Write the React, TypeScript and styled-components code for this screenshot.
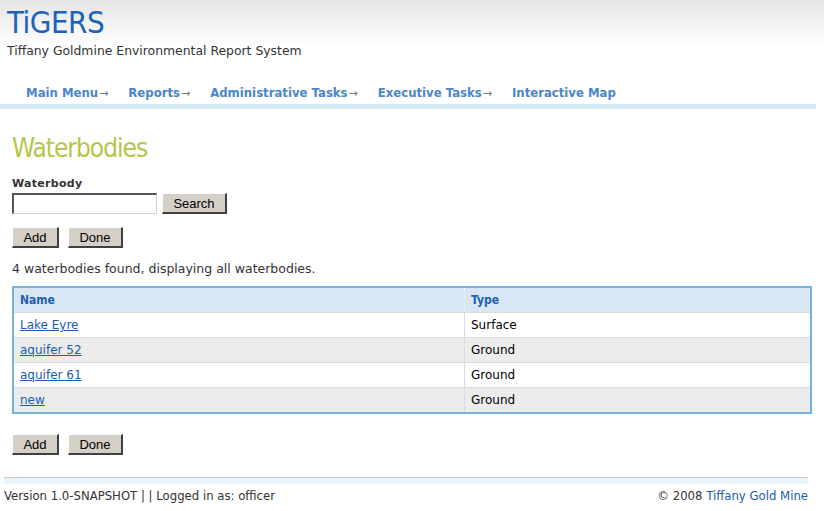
import React from "react";
import styled, { createGlobalStyle } from "styled-components";

interface Waterbody {
  name: string;
  type: string;
}

const waterbodies: Waterbody[] = [
  { name: "Lake Eyre", type: "Surface" },
  { name: "aquifer 52", type: "Ground" },
  { name: "aquifer 61", type: "Ground" },
  { name: "new", type: "Ground" },
];

const navItems = [
  { label: "Main Menu", arrow: true },
  { label: "Reports", arrow: true },
  { label: "Administrative Tasks", arrow: true },
  { label: "Executive Tasks", arrow: true },
  { label: "Interactive Map", arrow: false },
];

const App = () => {
  return (
    <>
      <GlobalStyle />
      <Header>
        <Logo>TiGERS</Logo>
        <Subtitle>Tiffany Goldmine Environmental Report System</Subtitle>
      </Header>
      <Nav>
        {navItems.map((item) => (
          <NavItem key={item.label}>
            <NavLink href="#">{item.label}</NavLink>
            {item.arrow && <NavArrow>→</NavArrow>}
          </NavItem>
        ))}
      </Nav>

      <Main>
        <Title>Waterbodies</Title>
        <SearchForm>
          <FieldLabel>Waterbody</FieldLabel>
          <SearchRow>
            <TextInput type="text" />
            <Button $width={65}>Search</Button>
          </SearchRow>
        </SearchForm>
        <ButtonRow>
          <Button $width={47}>Add</Button>
          <Button $width={55}>Done</Button>
        </ButtonRow>
        <Message>4 waterbodies found, displaying all waterbodies.</Message>

        <Table>
          <thead>
            <tr>
              <Th>Name</Th>
              <Th>Type</Th>
            </tr>
          </thead>
          <tbody>
            {waterbodies.map((w, i) => (
              <Row key={w.name} $odd={i % 2 === 1}>
                <Td>
                  <CellLink href="#">{w.name}</CellLink>
                </Td>
                <Td>{w.type}</Td>
              </Row>
            ))}
          </tbody>
        </Table>

        <ButtonRow $bottom>
          <Button $width={47}>Add</Button>
          <Button $width={55}>Done</Button>
        </ButtonRow>
      </Main>

      <Footer>
        <FooterText>Version 1.0-SNAPSHOT | | Logged in as: officer</FooterText>
        <FooterText>
          © 2008 <FooterLink href="#">Tiffany Gold Mine</FooterLink>
        </FooterText>
      </Footer>
    </>
  );
};

export default App;

const GlobalStyle = createGlobalStyle`
  body {
    margin: 0;
    background: #ffffff;
    font-family: "DejaVu Sans", Verdana, sans-serif;
    color: #333333;
  }
`;

const Header = styled.div`
  height: 78px;
  padding: 5px 7px 0;
  box-sizing: border-box;
  background: linear-gradient(#e4e4e4 0px, #f6f6f6 30px, #ffffff 48px);
`;

const Logo = styled.div`
  font-family: "DejaVu Sans Condensed", "DejaVu Sans", sans-serif;
  font-size: 31px;
  line-height: 34px;
  letter-spacing: -0.5px;
  color: #1b63b7;
`;

const Subtitle = styled.div`
  margin-top: 4px;
  font-size: 12.4px;
  line-height: 16px;
  color: #333333;
`;

const Nav = styled.nav`
  display: flex;
  align-items: flex-end;
  height: 31px;
  margin-right: 8px;
  padding-left: 26px;
  padding-bottom: 4px;
  box-sizing: border-box;
  gap: 20px;
  border-bottom: 5px solid #d6e8f4;
`;

const NavItem = styled.div`
  display: flex;
  align-items: center;
`;

const NavLink = styled.a`
  font-family: "DejaVu Sans", sans-serif;
  font-size: 11.7px;
  font-weight: bold;
  color: #4a86c8;
  text-decoration: none;
`;

const NavArrow = styled.span`
  font-family: "DejaVu Sans", sans-serif;
  font-size: 11px;
  color: #777777;
  margin-left: 1px;
`;

const Main = styled.div`
  padding: 0 12px;
`;

const Title = styled.h1`
  margin: 22px 0 0;
  font-family: "DejaVu Sans Condensed", "DejaVu Sans", sans-serif;
  font-size: 26px;
  line-height: 34px;
  font-weight: normal;
  letter-spacing: -1px;
  color: #b5c648;
`;

const SearchForm = styled.div`
  margin-top: 12px;
`;

const FieldLabel = styled.div`
  font-size: 11px;
  font-weight: bold;
  line-height: 14px;
  letter-spacing: 0.3px;
  color: #333333;
`;

const SearchRow = styled.div`
  display: flex;
  align-items: center;
  gap: 5px;
  margin-top: 2px;
`;

const TextInput = styled.input`
  width: 145px;
  height: 21px;
  box-sizing: border-box;
  margin: 0;
  padding: 0 2px;
  border: 1px solid;
  border-color: #555555 #d4d0c8 #d4d0c8 #555555;
  border-top-width: 2px;
  border-left-width: 2px;
  background: #ffffff;
`;

const Button = styled.button<{ $width: number }>`
  width: ${(p) => p.$width}px;
  height: 21px;
  box-sizing: border-box;
  margin: 0;
  padding: 0;
  font-family: "Liberation Sans", Arial, sans-serif;
  font-size: 13px;
  color: #000000;
  background: #d4d0c8;
  border: 1px solid;
  border-color: #ffffff #404040 #404040 #ffffff;
  border-right-width: 2px;
  border-bottom-width: 2px;
`;

const ButtonRow = styled.div<{ $bottom?: boolean }>`
  display: flex;
  gap: 9px;
  margin-top: ${(p) => (p.$bottom ? "20px" : "13px")};
`;

const Message = styled.div`
  margin-top: 13px;
  font-size: 12.5px;
  line-height: 16px;
  color: #333333;
`;

const Table = styled.table`
  width: 800px;
  margin-top: 9px;
  border-collapse: collapse;
  border: 2px solid #74b3df;
  font-family: "DejaVu Sans", sans-serif;
  font-size: 12px;
`;

const Th = styled.th`
  height: 24px;
  padding: 0 6px;
  text-align: left;
  font-family: "DejaVu Sans Condensed", "DejaVu Sans", sans-serif;
  font-weight: bold;
  color: #1d5fb0;
  background: #d7e8f4;
  border-left: 1px solid #e8eef3;
  border-bottom: 1px solid #dcdcdc;
  &:first-child {
    width: 438px;
    border-left: none;
  }
`;

const Row = styled.tr<{ $odd: boolean }>`
  background: ${(p) => (p.$odd ? "#ececec" : "#ffffff")};
`;

const Td = styled.td`
  height: 24px;
  padding: 0 6px;
  color: #000000;
  border-left: 1px solid #dcdcdc;
  border-bottom: 1px solid #dcdcdc;
  &:first-child {
    border-left: none;
  }
`;

const CellLink = styled.a`
  color: #1a5db0;
  text-decoration: underline;
`;

const Footer = styled.div`
  display: flex;
  justify-content: space-between;
  align-items: center;
  margin: 22px 16px 0 4px;
  padding-top: 7px;
  height: 21px;
  border-top: 1px solid #cccccc;
  background: linear-gradient(#eaf4fb 0px, #eaf4fb 6px, #ffffff 6px);
`;

const FooterText = styled.div`
  font-family: "DejaVu Sans", sans-serif;
  font-size: 11.7px;
  color: #333333;
`;

const FooterLink = styled.a`
  color: #1a5db0;
  text-decoration: none;
`;
